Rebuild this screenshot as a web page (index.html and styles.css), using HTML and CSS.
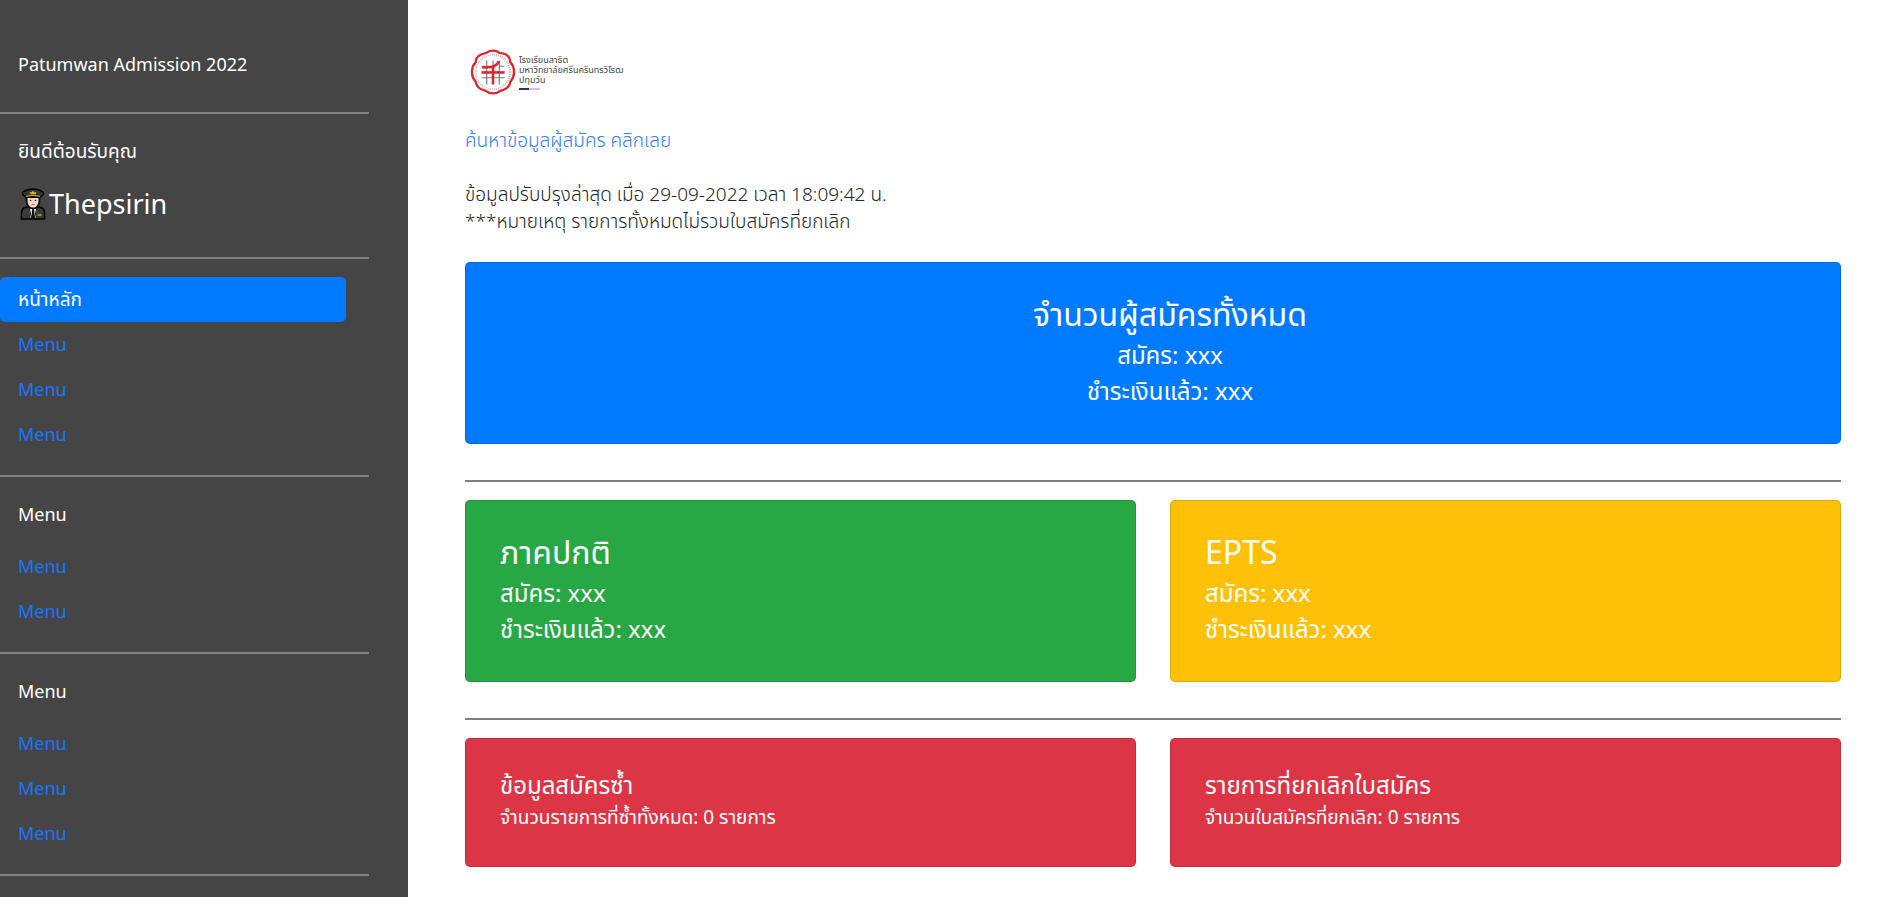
FILE: index.html
```
<!DOCTYPE html>
<html lang="th">
<head>
<meta charset="utf-8">
<meta name="viewport" content="width=device-width, initial-scale=1">
<title>Patumwan Admission 2022</title>
<link rel="stylesheet" href="styles.css">
</head>
<body>
<div class="layout">
  <aside class="sidebar">
    <p class="brand">Patumwan Admission 2022</p>
    <hr class="rule">
    <div class="welcome">
      <p class="group-title thai">ยินดีต้อนรับคุณ</p>
      <p class="user">
        <svg class="avatar" viewBox="0 0 26 32" aria-hidden="true">
          <path d="M1.5 31V25q0-5 5-6h13q5 1 5 6v6z" fill="#3a3a3a" stroke="#000" stroke-width="1.6"/>
          <path d="M9 18.500h8L15.500 30h-5z" fill="#f2f2f5"/>
          <path d="M12.200 20h1.800l.8 10h-3.400z" fill="#111"/>
          <path d="M9 19l2.500 11M17 19l-2.500 11" stroke="#111"/>
          <path d="M5.500 9h15v4q-.5 6-5 8h-5q-4.500-2-5-8z" fill="#111"/>
          <path d="M7.500 10h11v3q-.5 5-4 6.500h-3q-3.500-1.500-4-6.500z" fill="#f6d5c3"/>
          <circle cx="10.500" cy="12.500" r=".8" fill="#222"/><circle cx="15.500" cy="12.500" r=".8" fill="#222"/>
          <path d="M11.500 16.500h3" stroke="#a33" stroke-width=".8"/>
          <path d="M2.500 4.500Q7 1 13 1t10.500 3.500q.5 2.500-3 4.500h-15Q2 7 2.500 4.500z" fill="#333" stroke="#000" stroke-width="1.400"/>
          <path d="M6 8.500q7-2 14 0" fill="none" stroke="#e0b000" stroke-width="1.200"/>
          <path d="M9.500 4l2 .6L13 2.800l1.500 1.800 2-.6-1 2.300h-5z" fill="#e6b800"/>
          <path d="M17.500 27h4" stroke="#e6b800" stroke-width="1.200"/>
        </svg><span>Thepsirin</span>
      </p>
    </div>
    <hr class="rule">
    <nav class="menu" aria-label="หน้าหลัก">
      <a class="menu-link active thai" href="#" aria-current="page">หน้าหลัก</a>
      <a class="menu-link" href="#">Menu</a>
      <a class="menu-link" href="#">Menu</a>
      <a class="menu-link" href="#">Menu</a>
    </nav>
    <hr class="rule">
    <p class="group-title">Menu</p>
    <nav class="menu" aria-label="Menu">
      <a class="menu-link" href="#">Menu</a>
      <a class="menu-link" href="#">Menu</a>
    </nav>
    <hr class="rule">
    <p class="group-title">Menu</p>
    <nav class="menu" aria-label="Menu">
      <a class="menu-link" href="#">Menu</a>
      <a class="menu-link" href="#">Menu</a>
      <a class="menu-link" href="#">Menu</a>
    </nav>
    <hr class="rule">
  </aside>

  <main class="content">
    <div class="logo">
      <svg class="emblem" viewBox="0 0 46 46" aria-hidden="true">
        <path d="M23 2.500Q27 2.500 29.500 5Q36 5 38.500 9.500Q40 13 39.500 13.500Q43.500 18 43 23Q43.500 28 39.500 32.500Q39 39 30 41Q27 43.500 23 43.500Q19 43.500 16 41Q7 39 6.500 32.500Q2.500 28 3 23Q2.500 18 6.500 13.500Q6 7 16 5Q19 2.500 23 2.500z" fill="#fff" stroke="#e2232e" stroke-width="2.200"/>
        <circle cx="23" cy="23" r="16.500" fill="none" stroke="#bbb" stroke-width="1.800" stroke-dasharray="1 1"/>
        <path d="M17 12v23M23 12v5M29 12v23M12 17.500h9M29 17.500h5M12 23h22M12 28.500h22" stroke="#777" stroke-width="1.100"/>
        <path d="M23 18v17M12 23.500h22M12.500 18.500q14 1 16-6" fill="none" stroke="#e2232e" stroke-width="2.400"/>
      </svg>
      <div class="logo-text">
        <span>โรงเรียนสาธิต</span>
        <span>มหาวิทยาลัยศรีนครินทรวิโรฒ</span>
        <span>ปทุมวัน</span>
        <i class="logo-bar"></i>
      </div>
    </div>
    <a class="search-link" href="#">ค้นหาข้อมูลผู้สมัคร คลิกเลย</a>
    <p class="note">ข้อมูลปรับปรุงล่าสุด เมื่อ 29-09-2022 เวลา 18:09:42 น.<br>***หมายเหตุ รายการทั้งหมดไม่รวมใบสมัครที่ยกเลิก</p>

    <section class="card blue centered">
      <h2>จำนวนผู้สมัครทั้งหมด</h2>
      <p>สมัคร: xxx</p>
      <p>ชำระเงินแล้ว: xxx</p>
    </section>
    <hr class="rule">
    <div class="pair">
      <section class="card green">
        <h2>ภาคปกติ</h2>
        <p>สมัคร: xxx</p>
        <p>ชำระเงินแล้ว: xxx</p>
      </section>
      <section class="card yellow">
        <h2>EPTS</h2>
        <p>สมัคร: xxx</p>
        <p>ชำระเงินแล้ว: xxx</p>
      </section>
    </div>
    <hr class="rule">
    <div class="pair">
      <section class="card red small">
        <h3>ข้อมูลสมัครซ้ำ</h3>
        <p>จำนวนรายการที่ซ้ำทั้งหมด: 0 รายการ</p>
      </section>
      <section class="card red small">
        <h3>รายการที่ยกเลิกใบสมัคร</h3>
        <p>จำนวนใบสมัครที่ยกเลิก: 0 รายการ</p>
      </section>
    </div>
  </main>
</div>
</body>
</html>
```

FILE: styles.css
```
* { box-sizing: border-box; }
body {
  margin: 0;
  background: #fff;
  color: #212529;
  font-family: "Noto Sans", "Noto Sans Thai", sans-serif;
  font-size: 18px;
  line-height: 27px;
}
p, h2, h3 { margin: 0; font-weight: inherit; }
a { text-decoration: none; color: #1a75ff; }
.layout { display: flex; min-height: 100vh; }
.rule { margin: 18px 0; border: 0; height: 2px; background: #808080; }
.thai { font-size: 19px; }

.sidebar {
  flex: none;
  width: 408px;
  padding: 51px 39px 0 0;
  background: #454545;
  color: #fff;
}
.brand { padding: 0 18px 16px; }
.group-title { padding: 6px 18px 16px; }
.user {
  display: flex;
  align-items: center;
  gap: 3px;
  padding: 0 20px 12px;
  font-size: 27px;
  line-height: 46px;
}
.avatar { width: 26px; height: 32px; }
.menu { display: flex; flex-direction: column; margin-right: 23px; }
.menu-link { padding: 9px 18px; border-radius: 5px; }
.menu-link.active { background: #007bff; color: #fff; }

.content { flex: 1; min-width: 0; padding: 48px 51px 28px 57px; }
.logo { display: flex; align-items: center; gap: 2px; padding-left: 4px; }
.emblem { width: 48px; height: 48px; }
.logo-text {
  display: flex;
  flex-direction: column;
  color: #444;
  font-size: 9px;
  line-height: 10px;
}
.logo-bar {
  width: 21px;
  height: 2px;
  margin-top: 3px;
  background: linear-gradient(90deg, #2b3563 50%, #efb6dc 50%);
}
.search-link, .note { font-size: 19px; font-weight: 300; }
.search-link { display: block; margin: 31px 0 27px; color: #2f80ff; }
.note { margin-bottom: 27px; }

.card {
  padding: 35px 0 34px 34px;
  border: 1px solid rgba(0, 0, 0, .13);
  border-radius: 5px;
  color: #fff;
  font-size: 24px;
  line-height: 36px;
}
.card h2 { margin-bottom: 7px; font-size: 32px; line-height: 32px; }
.card h3 { margin-bottom: 8px; font-size: 24px; line-height: 21px; }
.card.small p { font-size: 19px; line-height: 29px; }
.centered { text-align: center; }
.blue { background: #007bff; }
.green { background: #28a745; }
.yellow { background: #ffc107; }
.red { background: #dc3545; }
.content .rule { margin-top: 36px; }
.pair { display: grid; grid-template-columns: 1fr 1fr; gap: 34px; }
```
